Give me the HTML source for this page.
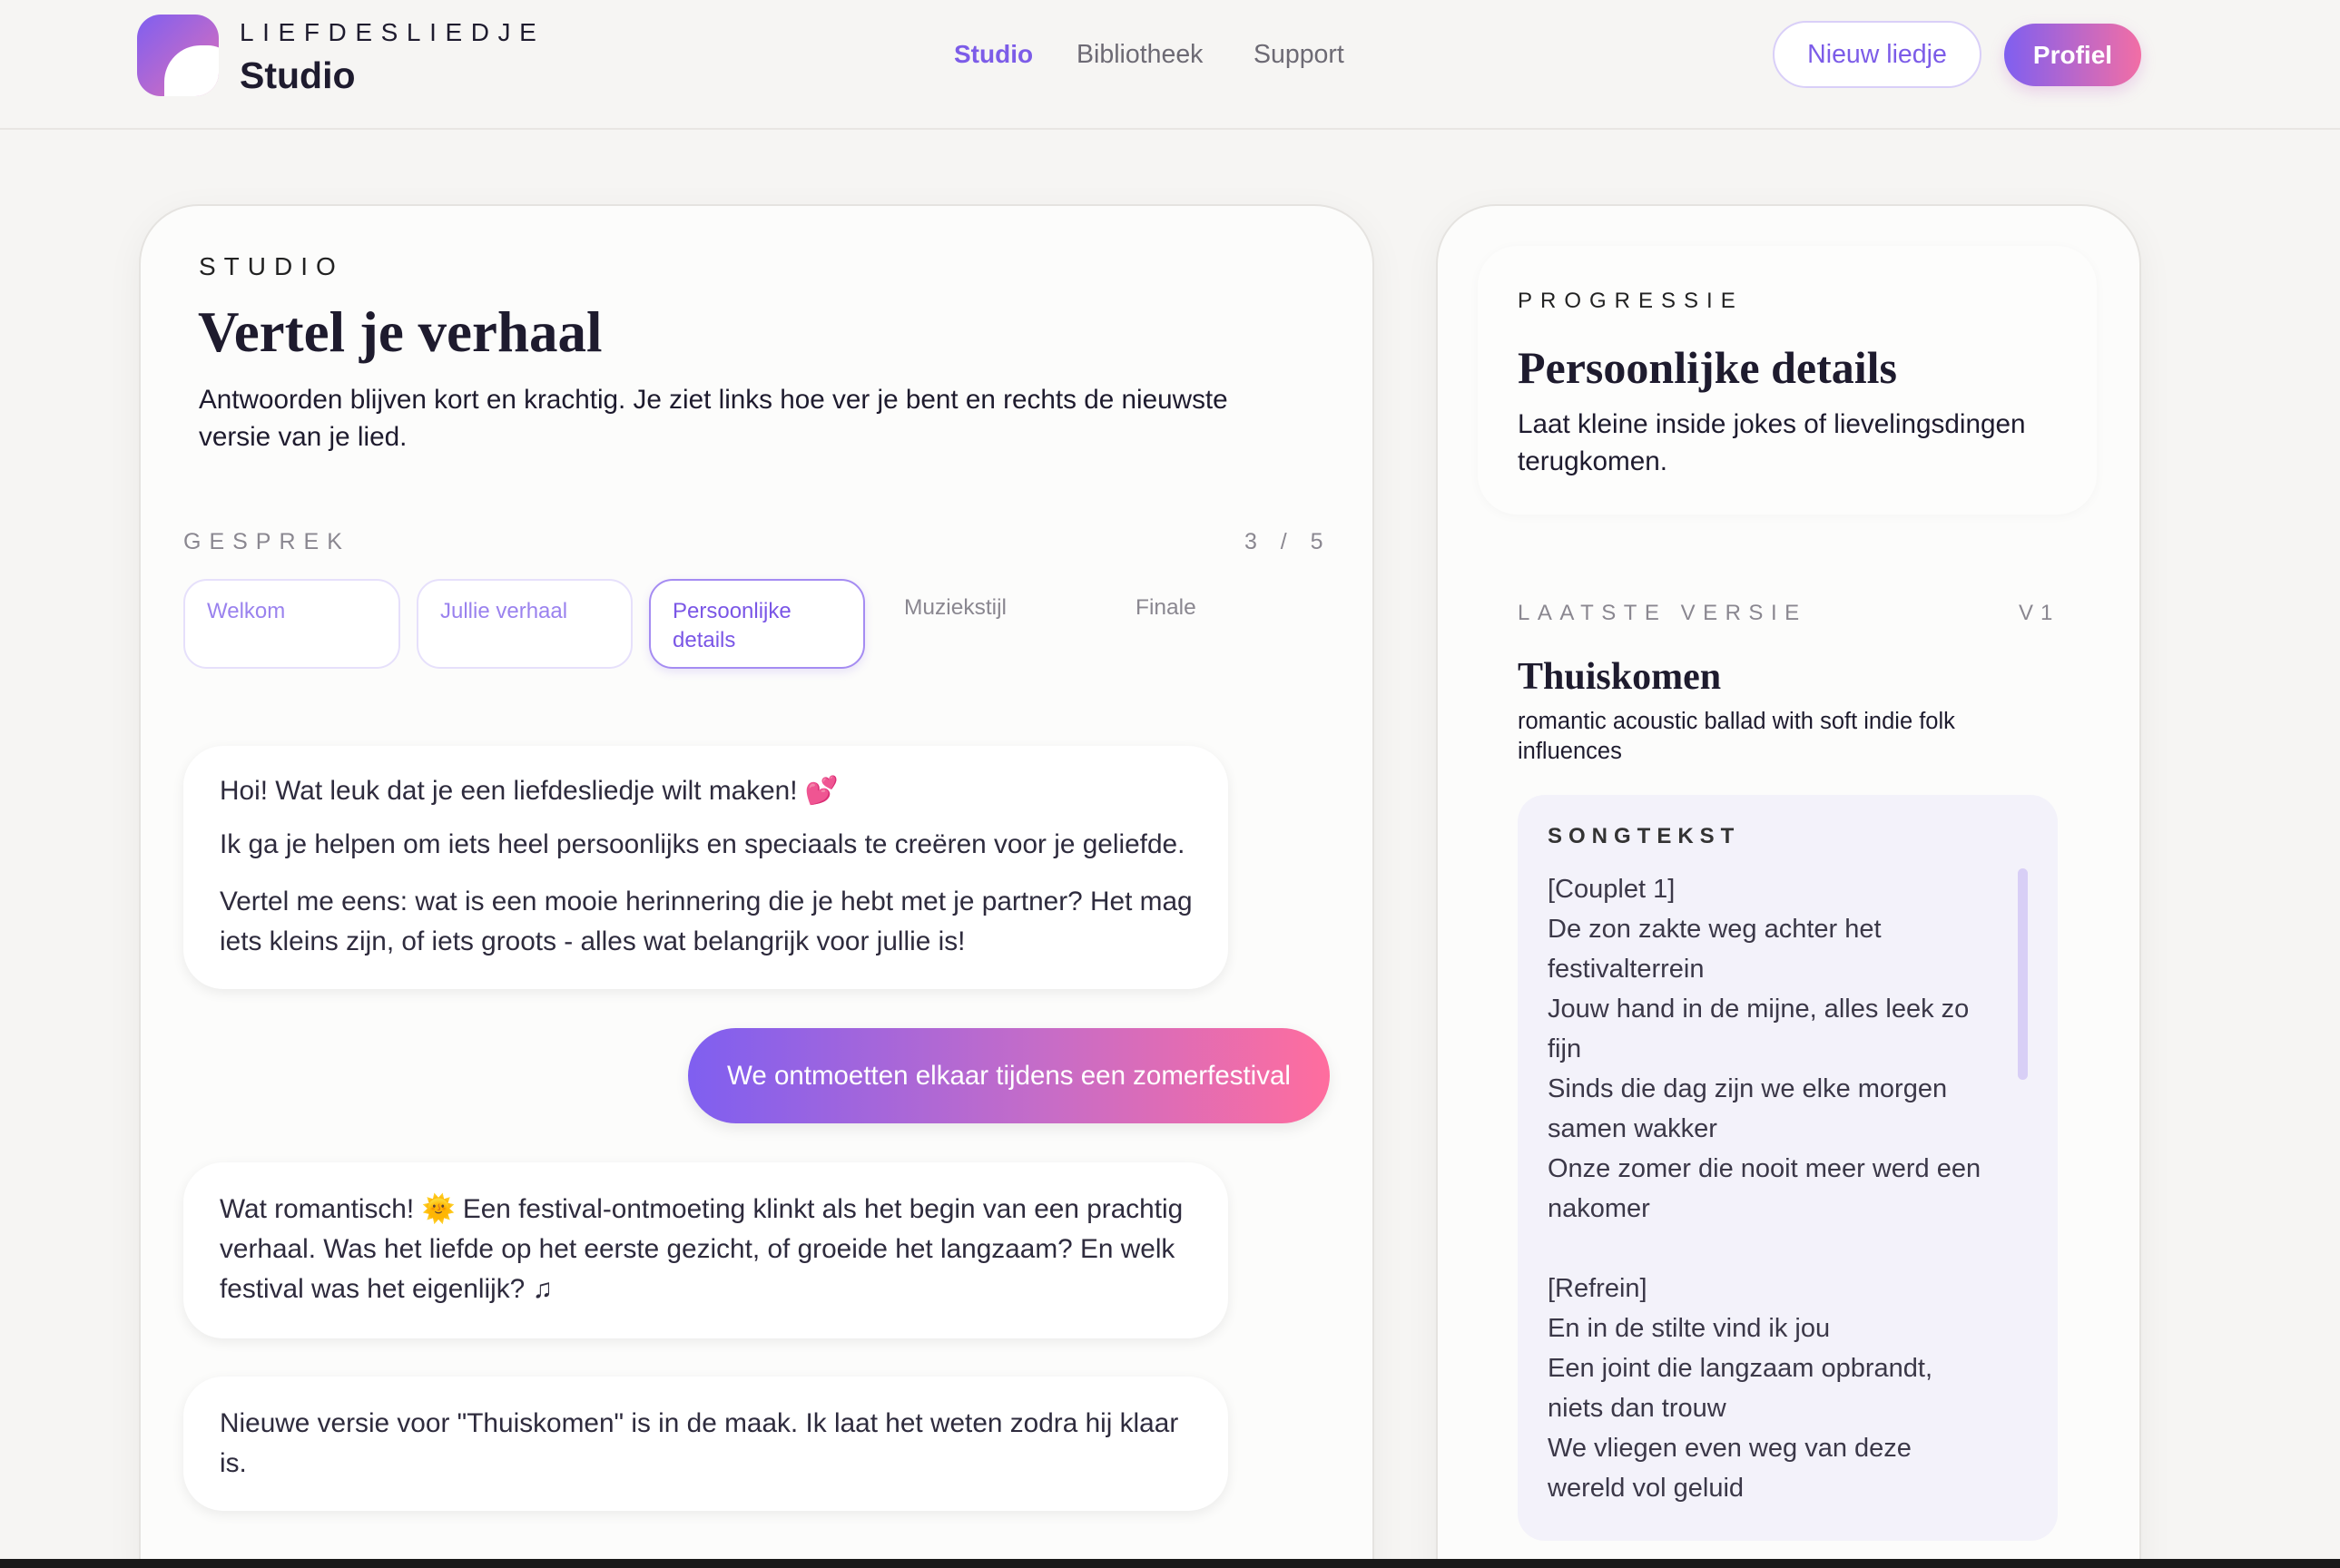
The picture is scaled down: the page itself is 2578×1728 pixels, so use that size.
<!DOCTYPE html>
<html style="overflow:hidden;height:1728px"><head><meta charset="utf-8"><style>
*{margin:0;padding:0;box-sizing:border-box}
body{width:2578px;height:1728px;background:#f6f5f3;font-family:"Liberation Sans",sans-serif;color:#1e1b2e;position:relative;overflow:hidden}
.a{position:absolute;white-space:nowrap}
.hdr{position:absolute;left:0;top:0;width:2578px;height:143px;border-bottom:2px solid #e8e6e3;background:#f6f5f3}
.logo{position:absolute;left:151px;top:16px;width:90px;height:90px;border-radius:26px;background:linear-gradient(135deg,#7f5ff0,#e070b8);overflow:hidden}
.logo:after{content:"";position:absolute;left:30px;top:34px;width:80px;height:80px;border-radius:50% 40% 20% 30%;background:#fff}
.card{position:absolute;background:#fcfcfb;border:2px solid #e5e3e0;border-radius:66px;box-shadow:0 10px 40px rgba(0,0,0,.05)}
.lbl{letter-spacing:9px;font-size:25px}
.serif{font-family:"Liberation Serif",serif;font-weight:bold}
.tab{position:absolute;top:638px;height:99px;border-radius:26px;border:2px solid #e6e0fb;background:#fff;font-size:24px;color:#9a82ee;padding:18px 24px;line-height:32px}
.bub{position:absolute;background:#fff;border-radius:44px;box-shadow:0 4px 14px rgba(0,0,0,.07);left:202px;width:1151px;font-size:29.8px;color:#2e2b3d;padding:0 40px}
.bub div{position:absolute;left:40px;white-space:nowrap}
.ly{position:absolute;left:1705px;font-size:29px;color:#3b3848;white-space:nowrap}
</style></head><body>
<div class="hdr"></div>
<div class="logo"></div>
<div class="a" style="left:264px;top:20px;font-size:28px;letter-spacing:9.6px">LIEFDESLIEDJE</div>
<div class="a" style="left:264px;top:60px;font-size:41px;font-weight:bold">Studio</div>
<div class="a" style="left:1051px;top:44px;font-size:28px;color:#7c5ce8;font-weight:bold">Studio</div>
<div class="a" style="left:1186px;top:44px;font-size:28.5px;color:#6d6a74">Bibliotheek</div>
<div class="a" style="left:1381px;top:44px;font-size:28.5px;color:#6d6a74">Support</div>
<div class="a" style="left:1953px;top:23px;width:230px;height:74px;border:2px solid #d9cff8;border-radius:37px;background:#fff;color:#7c5ce8;font-size:28.5px;text-align:center;line-height:70px">Nieuw liedje</div>
<div class="a" style="left:2208px;top:26px;width:151px;height:69px;border-radius:35px;background:linear-gradient(90deg,#7f5ff0,#f26ea5);color:#fff;font-size:28px;font-weight:bold;text-align:center;line-height:69px;box-shadow:0 6px 16px rgba(200,100,200,.25)">Profiel</div>

<div class="card" style="left:153px;top:225px;width:1361px;height:1560px"></div>
<div class="a lbl" style="left:219px;top:278px;font-size:28px;color:#222">STUDIO</div>
<div class="a serif" style="left:218px;top:330px;font-size:63px">Vertel je verhaal</div>
<div class="a" style="left:219px;top:420px;font-size:29.7px;line-height:41px">Antwoorden blijven kort en krachtig. Je ziet links hoe ver je bent en rechts de nieuwste<br>versie van je lied.</div>
<div class="a lbl" style="left:202px;top:583px;color:#8a8790">GESPREK</div>
<div class="a" style="left:1371px;top:583px;font-size:25px;color:#8a8790;letter-spacing:4px">3 &nbsp;/ &nbsp;5</div>
<div class="tab" style="left:202px;width:239px">Welkom</div>
<div class="tab" style="left:459px;width:238px">Jullie verhaal</div>
<div class="tab" style="left:715px;width:238px;border-color:#a58cf2;color:#7a56e6;box-shadow:0 4px 10px rgba(120,90,230,.15)">Persoonlijke<br>details</div>
<div class="a" style="left:996px;top:656px;font-size:24.5px;color:#8a8790">Muziekstijl</div>
<div class="a" style="left:1251px;top:656px;font-size:24.5px;color:#8a8790">Finale</div>

<div class="bub" style="top:822px;height:268px">
<div style="top:32px">Hoi! Wat leuk dat je een liefdesliedje wilt maken! <span style="color:#e8339a">💕</span></div>
<div style="top:92px">Ik ga je helpen om iets heel persoonlijks en speciaals te creëren voor je geliefde.</div>
<div style="top:150px;line-height:44px">Vertel me eens: wat is een mooie herinnering die je hebt met je partner? Het mag<br>iets kleins zijn, of iets groots - alles wat belangrijk voor jullie is!</div>
</div>
<div class="a" style="left:758px;top:1133px;width:707px;height:105px;border-radius:53px;background:linear-gradient(90deg,#7f5ff0,#c56cc8 55%,#ff6d9e);color:#fff;font-size:29.5px;text-align:center;line-height:105px;box-shadow:0 6px 16px rgba(0,0,0,.08)">We ontmoetten elkaar tijdens een zomerfestival</div>
<div class="bub" style="top:1281px;height:194px">
<div style="top:30px;line-height:44px">Wat romantisch! <span style="color:#f0b030">🌞</span> Een festival-ontmoeting klinkt als het begin van een prachtig<br>verhaal. Was het liefde op het eerste gezicht, of groeide het langzaam? En welk<br>festival was het eigenlijk? ♫</div>
</div>
<div class="bub" style="top:1517px;height:148px">
<div style="top:30px;line-height:44px">Nieuwe versie voor "Thuiskomen" is in de maak. Ik laat het weten zodra hij klaar<br>is.</div>
</div>

<div class="card" style="left:1582px;top:225px;width:777px;height:1560px"></div>
<div class="a" style="left:1628px;top:271px;width:682px;height:296px;border-radius:44px;background:#fdfdfc;box-shadow:0 2px 12px rgba(0,0,0,.03)"></div>
<div class="a lbl" style="left:1672px;top:318px;font-size:24px;color:#222">PROGRESSIE</div>
<div class="a serif" style="left:1672px;top:376px;font-size:50px">Persoonlijke details</div>
<div class="a" style="left:1672px;top:447px;font-size:29.7px;line-height:41px">Laat kleine inside jokes of lievelingsdingen<br>terugkomen.</div>
<div class="a lbl" style="left:1672px;top:662px;font-size:24px;color:#8a8790;letter-spacing:8.5px">LAATSTE VERSIE</div>
<div class="a" style="left:2224px;top:662px;font-size:24px;color:#8a8790;letter-spacing:8px">V1</div>
<div class="a serif" style="left:1672px;top:722px;font-size:42px">Thuiskomen</div>
<div class="a" style="left:1672px;top:779px;font-size:25.5px;line-height:33px">romantic acoustic ballad with soft indie folk<br>influences</div>
<div class="a" style="left:1672px;top:876px;width:595px;height:822px;border-radius:30px;background:#f3f2fa"></div>
<div class="a lbl" style="left:1705px;top:908px;font-size:24px;color:#333;font-weight:bold;letter-spacing:7px">SONGTEKST</div>
<div class="a" style="left:2223px;top:957px;width:11px;height:233px;border-radius:6px;background:#d8cff6"></div>
<div class="ly" style="top:958px;line-height:44px">[Couplet 1]<br>De zon zakte weg achter het<br>festivalterrein<br>Jouw hand in de mijne, alles leek zo<br>fijn<br>Sinds die dag zijn we elke morgen<br>samen wakker<br>Onze zomer die nooit meer werd een<br>nakomer<br><br>[Refrein]<br>En in de stilte vind ik jou<br>Een joint die langzaam opbrandt,<br>niets dan trouw<br>We vliegen even weg van deze<br>wereld vol geluid</div>
<div class="a" style="left:0;top:1718px;width:2578px;height:10px;background:#1a1a1a"></div>
</body></html>
